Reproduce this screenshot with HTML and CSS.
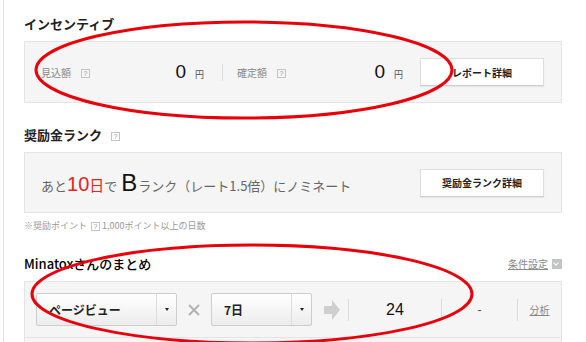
FILE: index.html
```html
<!DOCTYPE html>
<html lang="ja">
<head>
  <meta charset="UTF-8">
  <title>マイページ</title>
  <link rel="stylesheet" href="styles.css">
</head>
<body>

  <div class="page">
    <div class="title">インセンティブ</div>
    <div class="panel incentive">
      <div class="stat first">
        <span class="label">見込額<span class="help">?</span></span>
        <span class="amount">0<span class="yen">円</span></span>
      </div>
      <div class="sep"></div>
      <div class="stat second">
        <span class="label">確定額<span class="help">?</span></span>
        <span class="amount">0<span class="yen">円</span></span>
      </div>
      <a class="btn">レポート詳細</a>
    </div>

    <div class="title gap">奨励金ランク<span class="help">?</span></div>
    <div class="panel rank">
      <div class="rank-text">あと<span class="num red">10</span><span class="day red">日</span>で<span class="grade">B</span>ランク（レート1.5倍）にノミネート</div>
      <a class="btn">奨励金ランク詳細</a>
    </div>
    <div class="note">※奨励ポイント <span class="help">?</span> 1,000ポイント以上の日数</div>

    <div class="title gap summary-head">
      <span class="summary-name">Minatoxさんのまとめ</span>
      <a class="cond">条件設定<span class="drop"></span></a>
    </div>
    <div class="panel summary">
      <div class="summary-row">
        <div class="select wide">
          <span class="select-text">ページビュー</span>
          <span class="select-arrow"></span>
        </div>
        <div class="times">
          <svg width="12" height="12" viewBox="0 0 12 12"><path d="M1 1 L11 11 M11 1 L1 11" stroke="#b0b0b0" stroke-width="1.8"/></svg>
        </div>
        <div class="select narrow">
          <span class="select-text">7日</span>
          <span class="select-arrow"></span>
        </div>
        <svg class="go" width="16" height="20" viewBox="0 0 16 20"><polygon points="0,6 8,6 8,0 16,10 8,20 8,14 0,14" fill="#cfcfcf"/></svg>
        <div class="vsep"></div>
        <div class="cell value">24</div>
        <div class="vsep"></div>
        <div class="cell dash">-</div>
        <div class="vsep"></div>
        <div class="cell more"><a>分析</a></div>
      </div>
    </div>
  </div>

  <!-- red hand-drawn marks over the screenshot -->
  <svg class="marks" width="586" height="342" viewBox="0 0 586 342">
    <ellipse cx="244" cy="70" rx="208" ry="48" fill="none" stroke="#e8000b" stroke-width="3"/>
    <ellipse cx="252" cy="294" rx="220" ry="49" fill="none" stroke="#e8000b" stroke-width="3"/>
  </svg>

</body>
</html>
```

FILE: styles.css
```css
body {
  margin: 0;
  font-family: "Noto Sans CJK JP", sans-serif;
  color: #333;
  background: #fff;
}

.page {
  margin-left: 3px;
  border-left: 1px solid #e4e4e4;
  padding: 16px 24px 0 20px;
  height: 342px;
  box-sizing: border-box;
  overflow: hidden;
}

.title {
  font-size: 13px;
  font-weight: bold;
  line-height: 16px;
  color: #222;
  margin-bottom: 9px;
}

.title.gap {
  margin-top: 24px;
}

.help {
  display: inline-block;
  width: 7px;
  height: 7px;
  border: 1px solid #c4c4c4;
  font-family: "Liberation Sans", sans-serif;
  font-size: 7px;
  line-height: 7px;
  font-weight: normal;
  color: #999;
  text-align: center;
  vertical-align: middle;
  margin-left: 9px;
}

.panel {
  background: #f5f5f5;
  border: 1px solid #e4e4e4;
}

.incentive {
  height: 62px;
  box-sizing: border-box;
  display: flex;
  align-items: center;
  padding: 0 17px 0 16px;
}

.stat {
  display: flex;
  align-items: center;
  justify-content: space-between;
  box-sizing: border-box;
}

.stat.first {
  width: 181px;
  padding-right: 18px;
}

.stat.second {
  flex: 1;
  padding: 0 17px 0 14px;
}

.label {
  font-size: 10px;
  color: #888;
}

.label .help {
  margin-left: 10px;
}

.amount {
  display: flex;
  align-items: baseline;
  font-family: "Liberation Sans", Arial, sans-serif;
  font-size: 19px;
  color: #111;
}

.yen {
  font-family: "Noto Sans CJK JP", sans-serif;
  font-size: 9px;
  color: #555;
  margin-left: 9px;
}

.sep {
  width: 1px;
  height: 17px;
  background: #dcdcdc;
}

.btn {
  width: 124px;
  height: 28px;
  box-sizing: border-box;
  display: flex;
  align-items: center;
  justify-content: center;
  background: #fff;
  border: 1px solid #dedede;
  border-bottom-color: #cfcfcf;
  box-shadow: 0 1px 1px rgba(0, 0, 0, 0.06);
  font-size: 10px;
  font-weight: bold;
  color: #222;
}

.rank {
  height: 61px;
  box-sizing: border-box;
  display: flex;
  align-items: center;
  justify-content: space-between;
  padding: 0 17px 0 16px;
}

.rank-text {
  font-size: 13px;
  color: #666;
  white-space: nowrap;
}

.red {
  color: #e8231a;
}

.num {
  font-family: "Liberation Sans", Arial, sans-serif;
  font-size: 20px;
}

.day {
  font-size: 15px;
}

.grade {
  font-family: "Liberation Sans", Arial, sans-serif;
  font-size: 24px;
  color: #111;
  margin: 0 1px 0 4px;
}

.note {
  margin-top: 7px;
  font-size: 9px;
  line-height: 12px;
  color: #999;
}

.note .help {
  margin-left: 2px;
}

.summary-head {
  display: flex;
  justify-content: space-between;
  align-items: center;
}

.summary-name {
  font-weight: 500;
  color: #000;
}

.cond {
  display: flex;
  align-items: center;
  font-size: 10px;
  font-weight: normal;
  color: #888;
  text-decoration: underline;
}

.drop {
  width: 10px;
  height: 10px;
  margin-left: 4px;
  background: #c4c4c4;
  position: relative;
}

.drop::after {
  content: "";
  position: absolute;
  left: 2px;
  top: 2px;
  width: 3px;
  height: 3px;
  border-right: 1.5px solid #fff;
  border-bottom: 1.5px solid #fff;
  transform: rotate(45deg);
}

.summary {
  height: 200px;
}

.summary-row {
  display: flex;
  align-items: center;
  padding: 11px 0 11px 11px;
  border-bottom: 1px solid #e4e4e4;
}

.select {
  display: flex;
  height: 33px;
  box-sizing: border-box;
  border: 1px solid #cdcdcd;
  border-radius: 2px;
  background: linear-gradient(#ffffff, #ececec);
}

.select.wide {
  width: 141px;
}

.select.narrow {
  width: 101px;
}

.select-text {
  flex: 1;
  display: flex;
  align-items: center;
  padding-left: 12px;
  font-size: 12px;
  font-weight: bold;
  color: #222;
}

.select-arrow {
  width: 19px;
  border-left: 1px solid #dcdcdc;
  display: flex;
  align-items: center;
  justify-content: center;
}

.select-arrow::after {
  content: "";
  border-left: 2.5px solid transparent;
  border-right: 2.5px solid transparent;
  border-top: 3px solid #222;
}

.times {
  width: 34px;
  display: flex;
  justify-content: center;
}

.go {
  margin: 0 8px 0 12px;
}

.vsep {
  width: 1px;
  height: 22px;
  background: #dcdcdc;
}

.cell {
  text-align: center;
}

.cell.value {
  width: 92px;
  font-family: "Liberation Sans", Arial, sans-serif;
  font-size: 16px;
  color: #111;
}

.cell.dash {
  width: 75px;
  font-family: "Liberation Sans", Arial, sans-serif;
  font-size: 12px;
  color: #555;
}

.cell.more {
  flex: 1;
  font-size: 10px;
  color: #888;
}

.cell.more a {
  text-decoration: underline;
}

.marks {
  position: absolute;
  top: 0;
  left: 0;
  pointer-events: none;
}
```
